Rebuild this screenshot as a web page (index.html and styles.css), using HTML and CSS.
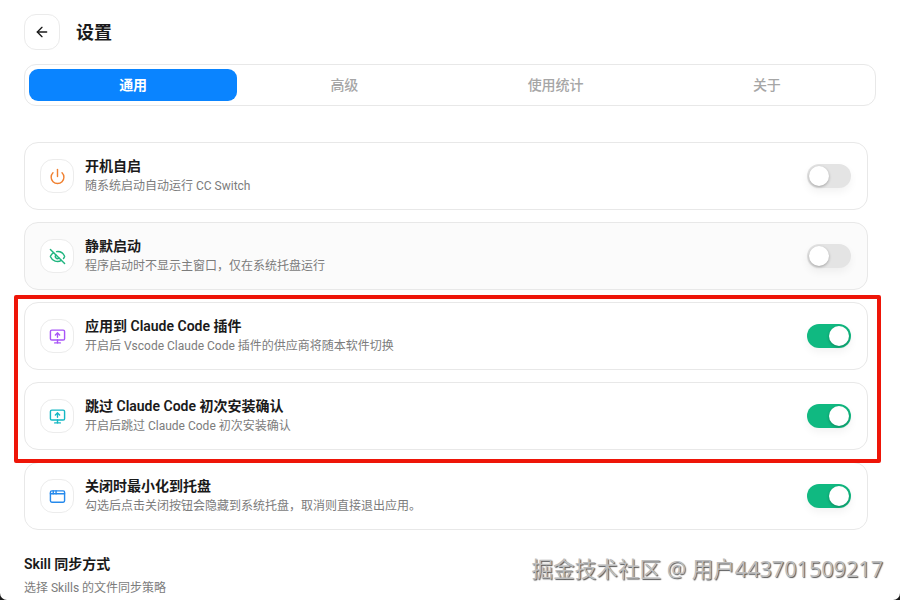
FILE: index.html
```html
<!DOCTYPE html>
<html lang="zh-CN">
<head>
<meta charset="utf-8">
<title>设置</title>
<link rel="stylesheet" href="styles.css">
</head>
<body>
<div class="app">
  <header class="header">
    <button class="back" aria-label="返回">
      <svg class="back-icon" viewBox="0 0 24 24"><path d="m12 19-7-7 7-7"/><path d="M19 12H5"/></svg>
    </button>
    <h1 class="title">设置</h1>
  </header>
  <nav class="tabs">
    <div class="tab active">通用</div>
    <div class="tab">高级</div>
    <div class="tab">使用统计</div>
    <div class="tab">关于</div>
  </nav>
  <div class="list">
    <section class="card">
      <div class="icon-box orange"><svg viewBox="0 0 24 24"><path d="M12 2v10"/><path d="M18.4 6.6a9 9 0 1 1-12.77.04"/></svg></div>
      <div class="text"><div class="name">开机自启</div><div class="desc">随系统启动自动运行 CC Switch</div></div>
      <div class="switch"><span class="knob"></span></div>
    </section>
    <section class="card muted">
      <div class="icon-box green"><svg viewBox="0 0 24 24"><path d="M10.733 5.076a10.744 10.744 0 0 1 11.205 6.575 1 1 0 0 1 0 .696 10.747 10.747 0 0 1-1.444 2.49"/><path d="M14.084 14.158a3 3 0 0 1-4.242-4.242"/><path d="M17.479 17.499a10.75 10.75 0 0 1-15.417-5.151 1 1 0 0 1 0-.696 10.75 10.75 0 0 1 4.446-5.143"/><path d="m2 2 20 20"/></svg></div>
      <div class="text"><div class="name">静默启动</div><div class="desc">程序启动时不显示主窗口，仅在系统托盘运行</div></div>
      <div class="switch"><span class="knob"></span></div>
    </section>
    <section class="card">
      <div class="icon-box purple"><svg viewBox="0 0 24 24"><path d="m9 10 3-3 3 3"/><path d="M12 13V7"/><rect width="20" height="14" x="2" y="3" rx="2"/><path d="M12 17v4"/><path d="M8 21h8"/></svg></div>
      <div class="text"><div class="name">应用到 Claude Code 插件</div><div class="desc">开启后 Vscode Claude Code 插件的供应商将随本软件切换</div></div>
      <div class="switch on"><span class="knob"></span></div>
    </section>
    <section class="card">
      <div class="icon-box cyan"><svg viewBox="0 0 24 24"><path d="m9 10 3-3 3 3"/><path d="M12 13V7"/><rect width="20" height="14" x="2" y="3" rx="2"/><path d="M12 17v4"/><path d="M8 21h8"/></svg></div>
      <div class="text"><div class="name">跳过 Claude Code 初次安装确认</div><div class="desc">开启后跳过 Claude Code 初次安装确认</div></div>
      <div class="switch on"><span class="knob"></span></div>
    </section>
    <section class="card">
      <div class="icon-box blue"><svg viewBox="0 0 24 24"><rect x="2" y="4" width="20" height="16" rx="2"/><path d="M2 8h20"/><path d="M6 4v4"/><path d="M10 4v4"/></svg></div>
      <div class="text"><div class="name">关闭时最小化到托盘</div><div class="desc">勾选后点击关闭按钮会隐藏到系统托盘，取消则直接退出应用。</div></div>
      <div class="switch on"><span class="knob"></span></div>
    </section>
  </div>
  <div class="section-head">
    <div class="name">Skill 同步方式</div>
    <div class="desc">选择 Skills 的文件同步策略</div>
  </div>
  <div class="highlight"></div>
  <div class="watermark">掘金技术社区 @ 用户443701509217</div>
</div>
</body>
</html>
```
FILE: styles.css
```css
* { box-sizing: border-box; }
html, body { margin: 0; height: 100%; background: #1a1a1a; }
body { font-family: Roboto, "Noto Sans CJK SC", sans-serif; color: #1a1a1a; }
.app {
  position: relative;
  width: 900px;
  height: 600px;
  padding: 14px 24px 0;
  background: #fff;
  overflow: hidden;
  border-radius: 0 0 7px 7px;
}
.header { display: flex; align-items: center; gap: 16px; height: 36px; margin-bottom: 14px; }
.back {
  width: 36px; height: 36px; padding: 0;
  display: flex; align-items: center; justify-content: center;
  background: #fff; border: 1px solid #ebebeb; border-radius: 12px;
}
.back-icon { width: 16px; height: 16px; fill: none; stroke: #1a1a1a; stroke-width: 2; stroke-linecap: round; stroke-linejoin: round; }
.title { margin: 0; padding-top: 1px; font-size: 18px; line-height: 36px; font-weight: 700; color: #1a1a1a; }
.tabs {
  display: grid; grid-template-columns: repeat(4, 1fr); gap: 3px;
  height: 42px; padding: 4px; margin-bottom: 36px;
  border: 1px solid #e8e8e8; border-radius: 12px; background: #fff;
}
.tab { display: flex; align-items: center; justify-content: center; padding-bottom: 3px; font-size: 14px; font-weight: 500; color: #a6a6a6; border-radius: 9px; }
.tab.active { background: #0a84ff; color: #fff; font-weight: 700; }
.list { display: flex; flex-direction: column; gap: 12px; width: 844px; }
.card {
  display: flex; align-items: center; gap: 11px;
  height: 68px; padding: 0 16px 0 15px;
  background: #fff; border: 1px solid #e8e8e8; border-radius: 14px;
}
.card.muted { background: #fbfbfb; }
.icon-box {
  flex: none; width: 34px; height: 34px;
  display: flex; align-items: center; justify-content: center;
  background: #fff; border: 1px solid #ececec; border-radius: 13px;
}
.icon-box svg { width: 17px; height: 17px; fill: none; stroke: currentColor; stroke-width: 2; stroke-linecap: round; stroke-linejoin: round; }
.orange { color: #f08030; }
.green { color: #1fb57f; }
.purple { color: #a855f7; }
.cyan { color: #14b8c4; }
.blue { color: #2589ec; }
.text { flex: 1; min-width: 0; padding-bottom: 2px; }
.name { font-size: 14px; line-height: 20px; margin-bottom: 1px; font-weight: 600; color: #1a1a1a; }
.desc { font-size: 12px; line-height: 18px; color: #7c7c7c; }
.switch {
  flex: none; width: 44px; height: 24px; padding: 2px;
  display: flex; background: #e4e4e4; border-radius: 12px;
  box-shadow: 0 4px 8px rgba(0, 0, 0, .05);
}
.switch.on { background: #10b981; justify-content: flex-end; }
.knob { width: 20px; height: 20px; border-radius: 50%; background: #fff; box-shadow: 0 1px 3px rgba(0, 0, 0, .3); }
.section-head { margin-top: 24px; }
.section-head .desc { margin-top: 5px; }
.highlight { position: absolute; left: 14px; top: 295px; width: 867px; height: 168px; border: 4px solid #ee1508; border-radius: 2px; }
.watermark {
  position: absolute; right: 17px; top: 555px;
  font-family: "Open Sans", "Noto Sans CJK SC", sans-serif;
  font-size: 21.6px; line-height: 28px; white-space: nowrap;
  color: #bdbdbd; text-shadow: 1px 1px 1px #555;
}
```
